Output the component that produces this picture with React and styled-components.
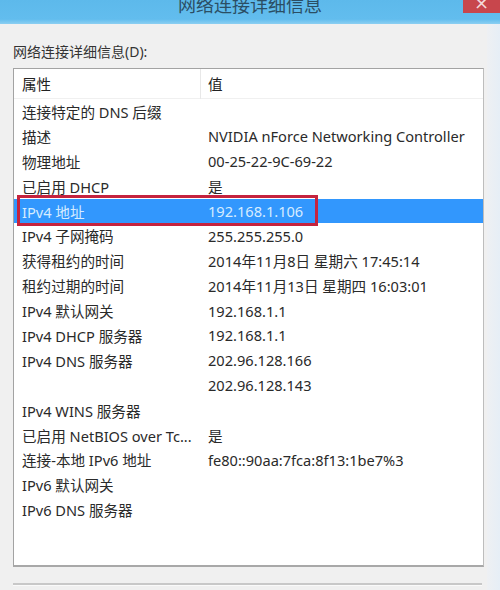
import React from "react";
import styled, { createGlobalStyle } from "styled-components";

const GlobalStyle = createGlobalStyle`
  html, body {
    margin: 0;
    padding: 0;
    background: #f0f0f0;
    font-family: "Noto Sans", "Noto Sans CJK SC", sans-serif;
  }
`;

const rows = [
  ["连接特定的 DNS 后缀", ""],
  ["描述", "NVIDIA nForce Networking Controller"],
  ["物理地址", "00-25-22-9C-69-22"],
  ["已启用 DHCP", "是"],
  ["IPv4 地址", "192.168.1.106", true],
  ["IPv4 子网掩码", "255.255.255.0"],
  ["获得租约的时间", "2014年11月8日 星期六 17:45:14"],
  ["租约过期的时间", "2014年11月13日 星期四 16:03:01"],
  ["IPv4 默认网关", "192.168.1.1"],
  ["IPv4 DHCP 服务器", "192.168.1.1"],
  ["IPv4 DNS 服务器", "202.96.128.166"],
  ["", "202.96.128.143"],
  ["IPv4 WINS 服务器", ""],
  ["已启用 NetBIOS over Tc...", "是"],
  ["连接-本地 IPv6 地址", "fe80::90aa:7fca:8f13:1be7%3"],
  ["IPv6 默认网关", ""],
  ["IPv6 DNS 服务器", ""],
];

function App() {
  return (
    <Window>
      <GlobalStyle />
      <TitleBar>
        <Title>网络连接详细信息</Title>
        <CloseBtn>×</CloseBtn>
      </TitleBar>
      <Body>
        <Content>
          <Caption>网络连接详细信息(D):</Caption>
          <ListBox>
            <Header>
              <HeadCell>属性</HeadCell>
              <HeadCell divider>值</HeadCell>
            </Header>
            {rows.map(([name, value, selected], i) => (
              <Row key={i} selected={selected}>
                <NameCell>{name}</NameCell>
                <ValueCell>{value}</ValueCell>
                {selected && <Marker />}
              </Row>
            ))}
          </ListBox>
          <Separator />
        </Content>
        <Frame />
      </Body>
    </Window>
  );
}

const Window = styled.div`
  width: 500px;
  height: 590px;
  overflow: hidden;
  display: flex;
  flex-direction: column;
  background: #f0f0f0;
`;

const TitleBar = styled.div`
  height: 24px;
  flex-shrink: 0;
  background: linear-gradient(#5db9eb, #62bdee 80%, #8ccff2);
  display: flex;
  justify-content: center;
  position: relative;
`;

const Title = styled.div`
  margin-top: -8px;
  font-size: 18px;
  line-height: 24px;
  color: #2b4e64;
  font-family: "Noto Sans CJK SC", sans-serif;
`;

const CloseBtn = styled.div`
  position: absolute;
  right: 0;
  top: 0;
  width: 37px;
  height: 13px;
  background: #c8464c;
  color: #f4dada;
  font-size: 18px;
  line-height: 6px;
  text-align: center;
  overflow: hidden;
  font-family: "DejaVu Sans", sans-serif;
`;

const Body = styled.div`
  flex: 1;
  display: flex;
`;

const Content = styled.div`
  width: 487px;
  padding: 18px 0 0 13px;
  box-sizing: border-box;
  display: flex;
  flex-direction: column;
`;

const Frame = styled.div`
  flex: 1;
  background: linear-gradient(90deg, #eef0f3, #e6eef6);
`;

const Caption = styled.div`
  font-size: 14px;
  line-height: 20px;
  color: #333;
  margin-bottom: 6px;
`;

const ListBox = styled.div`
  width: 471px;
  height: 499px;
  box-sizing: border-box;
  border: 1px solid #a3a3a3;
  border-right-color: #bdbdbd;
  border-bottom: 2px solid #a8a8a8;
  background: #fff;
  display: flex;
  flex-direction: column;
`;

const Header = styled.div`
  height: 29px;
  flex-shrink: 0;
  display: grid;
  grid-template-columns: 186px 1fr;
  border-bottom: 1px solid #f0f0f0;
`;

const HeadCell = styled.div`
  padding-left: ${(p) => (p.divider ? "7px" : "8px")};
  border-left: ${(p) => (p.divider ? "1px solid #e8e8e8" : "none")};
  font-size: 14.6px;
  line-height: 30px;
  color: #222;
`;

const Row = styled.div`
  height: 24.9px;
  flex-shrink: 0;
  display: grid;
  grid-template-columns: 194px 1fr;
  align-items: center;
  position: relative;
  background: ${(p) => (p.selected ? "#3297fd" : "transparent")};
  color: ${(p) => (p.selected ? "#d6ecff" : "#2a2a2a")};
  font-size: 14.6px;
`;

const NameCell = styled.div`
  padding-left: 8px;
  white-space: nowrap;
  overflow: hidden;
`;

const ValueCell = styled.div`
  white-space: nowrap;
`;

const Marker = styled.div`
  position: absolute;
  left: 3px;
  top: -4px;
  width: 301px;
  height: 31px;
  box-sizing: border-box;
  border: 3px solid #c5233e;
`;

const Separator = styled.div`
  margin-top: 16px;
  width: 469px;
  height: 2px;
  background: #c8c8c8;
  border-bottom: 1px solid #fafafa;
`;

export default App;
